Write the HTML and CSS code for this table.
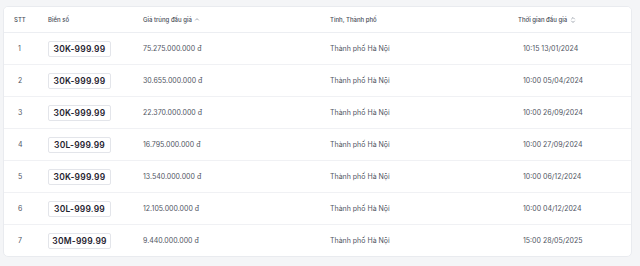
FILE: index.html
```html
<!DOCTYPE html>
<html lang="vi">
<head>
<meta charset="utf-8">
<link rel="stylesheet" href="styles.css">
</head>
<body>
<div class="card">
<table class="tbl">
<colgroup>
<col class="c1"><col class="c2"><col class="c3"><col class="c4"><col class="c5">
</colgroup>
<thead>
<tr>
<th>STT</th>
<th>Biển số</th>
<th>Giá trúng đấu giá <svg class="sort" width="6" height="8" viewBox="0 0 6 8"><path d="M1.3 4.3 L3 2.6 L4.7 4.3" fill="none" stroke="#9aa0aa" stroke-width="0.9"/></svg></th>
<th>Tỉnh, Thành phố</th>
<th>Thời gian đấu giá <svg class="sort" width="6" height="8" viewBox="0 0 6 8"><path d="M1.3 3.2 L3 1.5 L4.7 3.2 M1.3 4.8 L3 6.5 L4.7 4.8" fill="none" stroke="#9aa0aa" stroke-width="0.9"/></svg></th>
</tr>
</thead>
<tbody>
<tr><td class="num">1</td><td><span class="plate">30K-999.99</span></td><td>75.275.000.000 đ</td><td>Thành phố Hà Nội</td><td class="time">10:15 13/01/2024</td></tr>
<tr><td class="num">2</td><td><span class="plate">30K-999.99</span></td><td>30.655.000.000 đ</td><td>Thành phố Hà Nội</td><td class="time">10:00 05/04/2024</td></tr>
<tr><td class="num">3</td><td><span class="plate">30K-999.99</span></td><td>22.370.000.000 đ</td><td>Thành phố Hà Nội</td><td class="time">10:00 26/09/2024</td></tr>
<tr><td class="num">4</td><td><span class="plate">30L-999.99</span></td><td>16.795.000.000 đ</td><td>Thành phố Hà Nội</td><td class="time">10:00 27/09/2024</td></tr>
<tr><td class="num">5</td><td><span class="plate">30K-999.99</span></td><td>13.540.000.000 đ</td><td>Thành phố Hà Nội</td><td class="time">10:00 06/12/2024</td></tr>
<tr><td class="num">6</td><td><span class="plate">30L-999.99</span></td><td>12.105.000.000 đ</td><td>Thành phố Hà Nội</td><td class="time">10:00 04/12/2024</td></tr>
<tr><td class="num">7</td><td><span class="plate">30M-999.99</span></td><td>9.440.000.000 đ</td><td>Thành phố Hà Nội</td><td class="time">15:00 28/05/2025</td></tr>
</tbody>
</table>
</div>
</body>
</html>
```

FILE: styles.css
```css
html, body {
  margin: 0;
  padding: 0;
  background: #f4f5f7;
}
body {
  padding: 6px 8px 0 3px;
  font-family: Inter, "Noto Sans", sans-serif;
}
.card {
  width: 629px;
  box-sizing: border-box;
  background: #fff;
  border: 1px solid #e9ebef;
  border-radius: 5px;
  overflow: hidden;
}
.tbl {
  width: 100%;
  border-collapse: collapse;
  table-layout: fixed;
}
.c1 { width: 34px; }
.c2 { width: 95px; }
.c3 { width: 187px; }
.c4 { width: 188px; }
.c5 { width: auto; }
.tbl th {
  height: 25px;
  padding: 0 0 0 10px;
  text-align: left;
  font-size: 6px;
  font-weight: 500;
  color: #474c57;
  background: #fff;
  border-bottom: 1px solid #eceef2;
  white-space: nowrap;
}
.tbl td {
  height: 31px;
  padding: 0 0 0 10px;
  font-size: 7px;
  color: #50555f;
  border-bottom: 1px solid #f0f1f4;
  white-space: nowrap;
}
.tbl tbody tr:last-child td {
  border-bottom: none;
}
.tbl td.num {
  padding-left: 14px;
}
.tbl td.time {
  padding-left: 15px;
}
.sort {
  vertical-align: -2px;
  margin-left: 1px;
}
.plate {
  display: inline-block;
  width: 63px;
  height: 16px;
  line-height: 15px;
  box-sizing: border-box;
  border: 1px solid #e3e5ea;
  border-radius: 2px;
  text-align: center;
  font-size: 8.5px;
  font-weight: 600;
  color: #1f2330;
  letter-spacing: 0.2px;
}
```
